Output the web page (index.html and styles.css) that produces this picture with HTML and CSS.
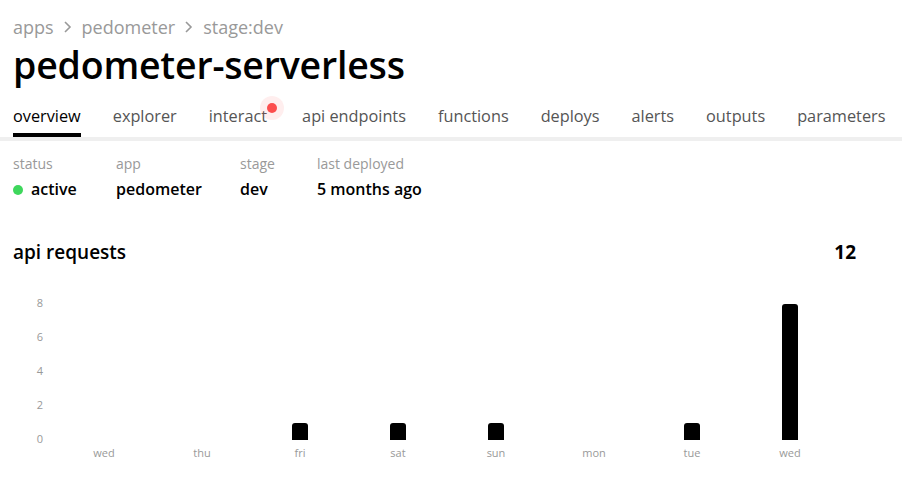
FILE: index.html
```html
<!DOCTYPE html>
<html>
<head>
<meta charset="utf-8">
<link rel="stylesheet" href="styles.css">
</head>
<body>
<div class="page">
  <nav class="crumbs">
    <span>apps</span>
    <svg class="chev" width="10" height="14" viewBox="0 0 10 14"><path d="M2 2l5 5-5 5" fill="none" stroke="#999" stroke-width="1.6"/></svg>
    <span>pedometer</span>
    <svg class="chev" width="10" height="14" viewBox="0 0 10 14"><path d="M2 2l5 5-5 5" fill="none" stroke="#999" stroke-width="1.6"/></svg>
    <span>stage:dev</span>
  </nav>
  <h1 class="title">pedometer-serverless</h1>
</div>
<div class="tabs-wrap">
  <ul class="tabs">
    <li class="tab active">overview</li>
    <li class="tab">explorer</li>
    <li class="tab tab-badge">interact<span class="badge"></span></li>
    <li class="tab">api endpoints</li>
    <li class="tab">functions</li>
    <li class="tab">deploys</li>
    <li class="tab">alerts</li>
    <li class="tab">outputs</li>
    <li class="tab">parameters</li>
  </ul>
</div>
<div class="page">
  <div class="meta">
    <div class="meta-item m-status"><div class="label">status</div><div class="value"><span class="dot"></span>active</div></div>
    <div class="meta-item m-app"><div class="label">app</div><div class="value">pedometer</div></div>
    <div class="meta-item m-stage"><div class="label">stage</div><div class="value">dev</div></div>
    <div class="meta-item"><div class="label">last deployed</div><div class="value">5 months ago</div></div>
  </div>
  <div class="section-head">
    <h2>api requests</h2>
    <span class="total">12</span>
  </div>
  <div class="chart">
    <div class="yaxis">
      <span>8</span><span>6</span><span>4</span><span>2</span><span>0</span>
    </div>
    <div class="cols">
      <div class="col"><div class="plot"></div><span class="xl">wed</span></div>
      <div class="col"><div class="plot"></div><span class="xl">thu</span></div>
      <div class="col"><div class="plot"><div class="bar" style="height:17px"></div></div><span class="xl">fri</span></div>
      <div class="col"><div class="plot"><div class="bar" style="height:17px"></div></div><span class="xl">sat</span></div>
      <div class="col"><div class="plot"><div class="bar" style="height:17px"></div></div><span class="xl">sun</span></div>
      <div class="col"><div class="plot"></div><span class="xl">mon</span></div>
      <div class="col"><div class="plot"><div class="bar" style="height:17px"></div></div><span class="xl">tue</span></div>
      <div class="col"><div class="plot"><div class="bar" style="height:136px"></div></div><span class="xl">wed</span></div>
    </div>
  </div>
</div>
</body>
</html>
```
FILE: styles.css
```css
* { box-sizing: border-box; }
html, body { margin: 0; padding: 0; background: #fff; }
body {
  font-family: "Open Sans", "Noto Sans", sans-serif;
  color: #000;
  width: 902px;
  overflow: hidden;
}
.page { padding: 0 13px; }
.crumbs {
  display: flex;
  align-items: center;
  gap: 9px;
  padding-top: 16px;
  height: 38px;
  font-size: 18px;
  font-weight: 500;
  color: #999;
  line-height: 22px;
}
.chev { display: block; }
.title {
  margin: 0;
  font-size: 37.5px;
  font-weight: 600;
  line-height: 53px;
  height: 53px;
  letter-spacing: -0.2px;
}
.tabs-wrap {
  border-bottom: 4px solid #efefef;
  margin-top: 9px;
}
.tabs {
  list-style: none;
  margin: 0;
  padding: 0 0 0 13px;
  display: flex;
  gap: 32px;
}
.tab {
  position: relative;
  font-size: 16.3px;
  font-weight: 500;
  color: #555;
  line-height: 22px;
  padding: 5px 0 6px;
  border-bottom: 4px solid transparent;
}
.tab-badge { margin-right: 3px; }
.tab.active { color: #000; border-bottom-color: #000; }
.badge {
  position: absolute;
  right: -17px;
  top: -4px;
  width: 24px;
  height: 24px;
  border-radius: 50%;
  background: rgba(255, 90, 90, 0.1);
}
.badge::after {
  content: "";
  position: absolute;
  left: 7px;
  top: 7px;
  width: 10px;
  height: 10px;
  border-radius: 50%;
  background: #fc4e4e;
}
.meta {
  display: flex;
  padding-top: 13px;
}
.meta-item { display: flex; flex-direction: column; }
.m-status { width: 103px; }
.m-app { width: 124px; }
.m-stage { width: 77px; }
.label {
  font-size: 14px;
  color: #999;
  line-height: 20px;
}
.value {
  font-size: 16px;
  font-weight: 600;
  line-height: 24px;
  margin-top: 3px;
  display: flex;
  align-items: center;
}
.dot {
  width: 10px;
  height: 10px;
  border-radius: 50%;
  background: #3ed75c;
  margin-right: 8px;
  margin-top: 2px;
}
.section-head {
  display: flex;
  justify-content: space-between;
  align-items: baseline;
  margin-top: 38px;
  width: 843px;
}
.section-head h2 {
  margin: 0;
  font-size: 19px;
  font-weight: 600;
  line-height: 26px;
}
.total {
  font-size: 19px;
  font-weight: 700;
}
.chart {
  display: flex;
  margin-top: 31px;
}
.yaxis {
  width: 42px;
  display: flex;
  flex-direction: column;
  align-items: center;
  gap: 20px;
  padding-left: 12px;
  font-size: 11px;
  color: #999;
  line-height: 14px;
}
.cols {
  display: grid;
  grid-template-columns: repeat(8, 98px);
}
.col {
  display: flex;
  flex-direction: column;
  align-items: center;
}
.plot {
  height: 144px;
  display: flex;
  align-items: flex-end;
}
.bar {
  width: 16px;
  background: #000;
  border-radius: 3px 3px 0 0;
}
.xl {
  font-size: 11px;
  color: #999;
  line-height: 14px;
  margin-top: 6px;
}
```
